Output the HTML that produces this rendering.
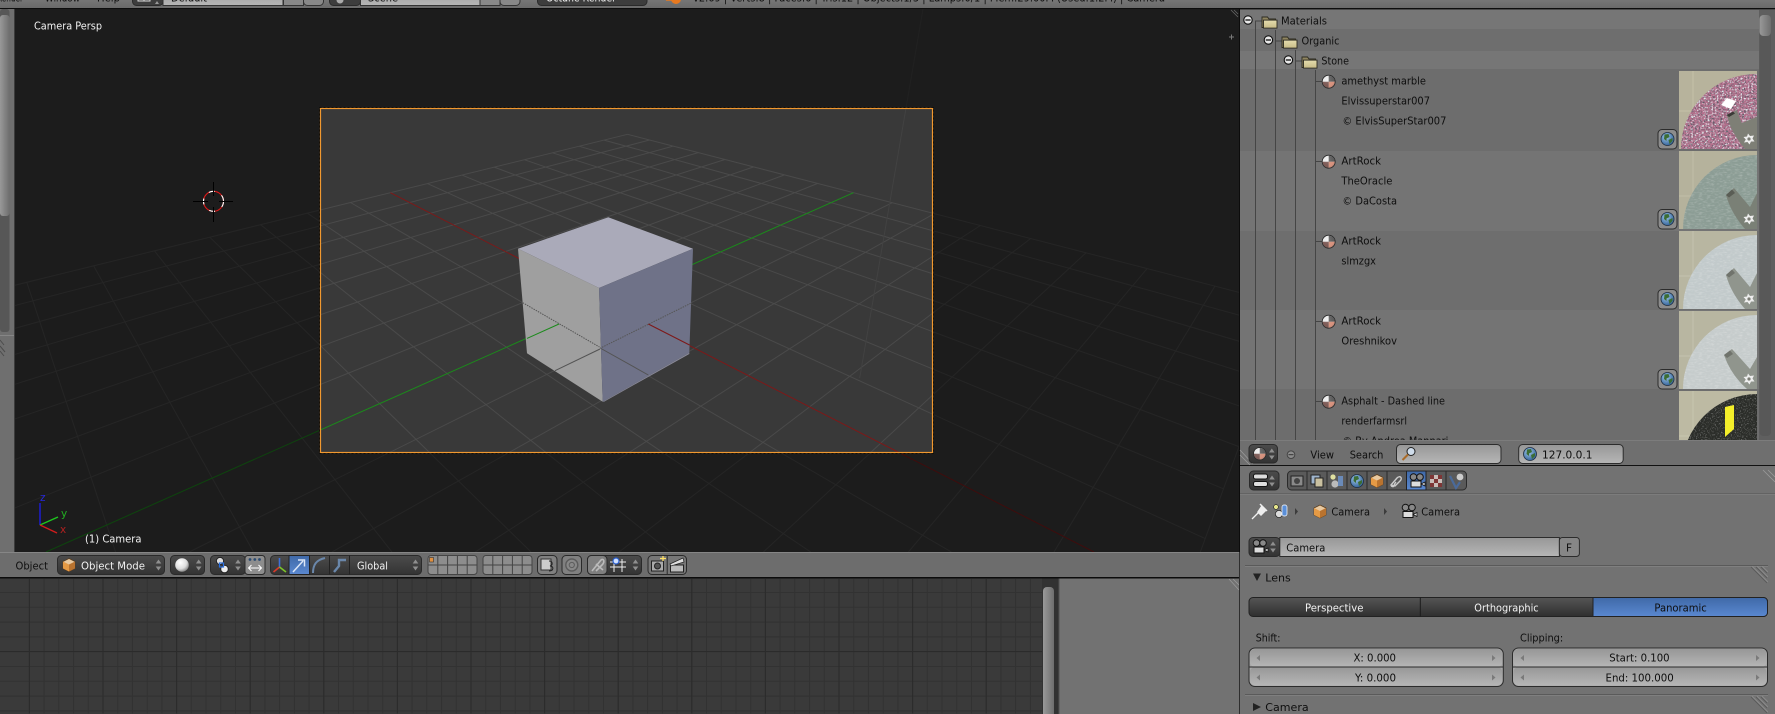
<!DOCTYPE html>
<html>
<head>
<meta charset="utf-8">
<style>
html,body{margin:0;padding:0;background:#727272;width:1775px;height:714px;overflow:hidden}
svg{display:block}
text{font-family:"DejaVu Sans","Liberation Sans",sans-serif;font-size:10.5px;fill:#0e0e0e}
text.w{fill:#f2f2f2}
</style>
</head>
<body>
<svg xmlns="http://www.w3.org/2000/svg" width="1775" height="714" viewBox="0 0 1775 714" style="overflow:hidden">
<defs>
<linearGradient id="fld" x1="0" y1="0" x2="0" y2="1"><stop offset="0" stop-color="#979797"/><stop offset="1" stop-color="#b6b6b6"/></linearGradient>
<linearGradient id="drk" x1="0" y1="0" x2="0" y2="1"><stop offset="0" stop-color="#4c4c4c"/><stop offset="1" stop-color="#333"/></linearGradient>
<linearGradient id="dk2" x1="0" y1="0" x2="0" y2="1"><stop offset="0" stop-color="#555"/><stop offset="1" stop-color="#2f2f2f"/></linearGradient>
<linearGradient id="blu" x1="0" y1="0" x2="0" y2="1"><stop offset="0" stop-color="#3f69a8"/><stop offset="1" stop-color="#5a88d0"/></linearGradient>
<linearGradient id="sb" x1="0" y1="0" x2="1" y2="0"><stop offset="0" stop-color="#999"/><stop offset="1" stop-color="#6e6e6e"/></linearGradient>
<linearGradient id="bar" x1="0" y1="0" x2="0" y2="1"><stop offset="0" stop-color="#767676"/><stop offset="1" stop-color="#6a6a6a"/></linearGradient>
<radialGradient id="ball" cx=".38" cy=".32" r=".75"><stop offset="0" stop-color="#fff"/><stop offset=".6" stop-color="#ddd"/><stop offset="1" stop-color="#777"/></radialGradient>
<radialGradient id="glb" cx=".4" cy=".35" r=".7"><stop offset="0" stop-color="#9fc6ea"/><stop offset="1" stop-color="#2f5f95"/></radialGradient>
<radialGradient id="matsh" cx=".38" cy=".32" r=".8"><stop offset="0" stop-color="#fff" stop-opacity=".2"/><stop offset=".7" stop-color="#888" stop-opacity="0"/><stop offset="1" stop-color="#000" stop-opacity=".35"/></radialGradient>
<linearGradient id="fold" x1="0" y1="0" x2="0" y2="1"><stop offset="0" stop-color="#e4dcae"/><stop offset="1" stop-color="#c9bd87"/></linearGradient>
<filter id="spk" x="0" y="0" width="100%" height="100%"><feTurbulence type="fractalNoise" baseFrequency=".55" numOctaves="2" seed="4"/><feColorMatrix values="0 0 0 0 .1  0 0 0 0 .1  0 0 0 0 .13  2.4 2.4 0 0 -2.3"/></filter>
<filter id="spw" x="0" y="0" width="100%" height="100%"><feTurbulence type="fractalNoise" baseFrequency=".55" numOctaves="2" seed="11"/><feColorMatrix values="0 0 0 0 .8  0 0 0 0 .87  0 0 0 0 .9  2.4 2.4 0 0 -2.4"/></filter>
<filter id="spd" x="0" y="0" width="100%" height="100%"><feTurbulence type="fractalNoise" baseFrequency=".8" numOctaves="1" seed="7"/><feColorMatrix values="0 0 0 0 .55  0 0 0 0 .55  0 0 0 0 .55  2 0 0 0 -1.05"/></filter>
<filter id="spt" x="0" y="0" width="100%" height="100%"><feTurbulence type="fractalNoise" baseFrequency=".25 .7" numOctaves="2" seed="3"/><feColorMatrix values="0 0 0 0 .95  0 0 0 0 .95  0 0 0 0 .95  1.6 0 0 0 -.7"/></filter>
<clipPath id="vp"><rect x="15" y="9" width="1224" height="543"/></clipPath>
<clipPath id="list"><rect x="1240" y="10" width="535" height="430"/></clipPath>
<clipPath id="top"><rect x="0" y="0" width="1775" height="8"/></clipPath>

<symbol id="mat" viewBox="-7 -7 14 14" overflow="visible">
<circle r="6.4" fill="#ddd" stroke="#2a2a2a" stroke-width="1"/>
<path d="M0 0V-6A6 6 0 0 0-6 0Z" fill="#f0f0f0"/><path d="M0 0H6A6 6 0 0 0 0-6Z" fill="#5c5c5c"/>
<path d="M0 0V6A6 6 0 0 0 6 0Z" fill="#d9937e"/><path d="M0 0H-6A6 6 0 0 0 0 6Z" fill="#7d5a55"/>
<circle r="6" fill="url(#matsh)"/>
</symbol>
<symbol id="globe" viewBox="-7 -7 14 14" overflow="visible">
<circle r="6.5" fill="url(#glb)" stroke="#1d2d40" stroke-width=".8"/>
<path d="M-3-4.500 1-5 2-2 -1-.5-1 2-3.500 0ZM1 1 5-1 5 2 2 5Z" fill="#3c6d34"/>
</symbol>
<symbol id="cube" viewBox="-7 -7 14 14" overflow="visible">
<path d="M0-6.500 6-3.500V3.500L0 6.500-6 3.500V-3.500Z" fill="#e8c9a0" stroke="#5a3c1c" stroke-width=".7"/>
<path d="M0-.5 6-3.500V3.500L0 6.500Z" fill="#b9732f"/><path d="M0-.5-6-3.500V3.500L0 6.500Z" fill="#e59a45"/>
</symbol>
<symbol id="cam" viewBox="-9 -8 18 16" overflow="visible">
<circle cx="-3.500" cy="-4" r="3.300" fill="#888" stroke="#111"/><circle cx="3" cy="-4" r="3.300" fill="#888" stroke="#111"/>
<rect x="-6" y="0" width="10" height="6" fill="#ddd" stroke="#111"/><path d="M4 3 8 1V5Z" fill="#ddd" stroke="#111" stroke-width=".7"/>
</symbol>
<symbol id="upd" viewBox="-3 -6 6 12" overflow="visible">
<path d="M0-5.500 2.800-1.500H-2.800ZM0 5.500 2.800 1.500H-2.800Z" fill="#8f8f8f"/>
</symbol>
<symbol id="minus" viewBox="-5 -5 10 10" overflow="visible">
<circle r="4.200" fill="#e8e8e8" stroke="#111" stroke-width="1.100"/><path d="M-2.600 0H2.600" stroke="#111" stroke-width="1.300"/>
</symbol>
<symbol id="folder" viewBox="0 0 16 13" overflow="visible">
<path d="M.5 1.500H6L7.500 3.500H14V12H.5Z" fill="#8f8560" stroke="#2c2a20" stroke-width=".9"/>
<rect x="2" y="4.600" width="13.500" height="8" fill="url(#fold)" stroke="#2c2a20" stroke-width=".9"/>
</symbol>
<symbol id="gear" viewBox="-6 -6 12 12" overflow="visible">
<path d="M-1-5.500 1-3 5-3.500 3.500-.5 5.500 2.500 2 2.500 .5 5.500-1.500 3-5 3.500-3.200.5-5.500-2-2-2.500Z" fill="#eee"/><circle r="1.600" fill="#7c7d75"/>
</symbol>
<symbol id="stripes" viewBox="0 0 18 18">
<path d="M2 0 18 16M7 0 18 11M12 0 18 6" stroke="#8a8a8a" stroke-width="1"/><path d="M1 1 17 17M6 1 17 12M11 1 17 7" stroke="#555" stroke-width=".7"/>
</symbol>
</defs>

<!-- base -->
<rect width="1775" height="714" fill="#727272"/>

<!-- top bar -->
<rect width="1775" height="8" fill="url(#bar)"/>
<g clip-path="url(#top)">
<text x="-3" y="1.500" textLength="26" lengthAdjust="spacingAndGlyphs">Render</text>
<text x="45" y="1.500" textLength="35" lengthAdjust="spacingAndGlyphs">Window</text>
<text x="97" y="1.500" textLength="23" lengthAdjust="spacingAndGlyphs">Help</text>
<rect x="132.500" y="-14" width="30.500" height="19.500" rx="4" fill="#3d3d3d" stroke="#2a2a2a"/>
<path d="M138-8H150V1H138ZM144-8V1M138-2H150" stroke="#ddd" fill="none"/>
<path d="M157 1 159 4 155 4Z" fill="#999"/>
<rect x="163" y="-14" width="120" height="19.500" fill="url(#fld)" stroke="#333"/>
<rect x="283.500" y="-14" width="20" height="19.500" fill="#888" stroke="#333"/>
<rect x="303.500" y="-14" width="20" height="19.500" rx="4" fill="#888" stroke="#333"/>
<text x="171" y="1.500" textLength="36" lengthAdjust="spacingAndGlyphs">Default</text>
<rect x="329.500" y="-14" width="31" height="19.500" rx="4" fill="#3d3d3d" stroke="#2a2a2a"/>
<circle cx="340" cy="0" r="3.500" fill="#aaa"/>
<rect x="360.500" y="-14" width="120" height="19.500" fill="url(#fld)" stroke="#333"/>
<rect x="480" y="-14" width="20" height="19.500" fill="#888" stroke="#333"/>
<rect x="500" y="-14" width="20" height="19.500" rx="4" fill="#888" stroke="#333"/>
<text x="368" y="1.500" textLength="30" lengthAdjust="spacingAndGlyphs">Scene</text>
<rect x="537.500" y="-14" width="109.500" height="19.500" rx="4" fill="#3d3d3d" stroke="#2a2a2a"/>
<text class="w" x="546" y="1.500" textLength="70" lengthAdjust="spacingAndGlyphs">Octane Render</text>
<circle cx="676" cy="-1" r="5" fill="#e8791f"/><path d="M666 0H672" stroke="#e8791f" stroke-width="1.500"/>
<text x="693" y="1.500" textLength="472" lengthAdjust="spacingAndGlyphs">v2.69 | Verts:8 | Faces:6 | Tris:12 | Objects:1/3 | Lamps:0/1 | Mem:29.00M (Used:1.2M) | Camera</text>
</g>
<rect x="0" y="8" width="1775" height="1.400" fill="#0d0d0d"/>

<!-- left strip -->
<rect x="0" y="9" width="14" height="543" fill="#6f6f6f"/>
<rect x="0" y="9" width="9.500" height="323" rx="3" fill="#575757"/>
<rect x="0" y="15" width="9.500" height="201" rx="3" fill="url(#sb)"/>
<rect x="0" y="335" width="14" height="1" fill="#868686"/>
<path d="M0 340 4 345M0 346 5 352M0 351 4 356" stroke="#4c4c4c"/>
<rect x="14" y="9" width="1" height="543" fill="#3c3c3c"/>

<!-- 3D viewport -->
<g clip-path="url(#vp)">
<rect x="15" y="9" width="1224" height="543" fill="#393939"/>
<g id="grid" stroke="#4a4a4a" stroke-width="1" fill="none"></g>
<path d="M923 9 859.700 378" stroke="#424242" stroke-width="1"/>
<path d="M390.400 192.700 606 303" stroke="#7e1818" stroke-width="1"/>
<path d="M606 303 1094 552" stroke="#7e1818" stroke-width="1"/>
<path d="M853.500 192.700 606 303" stroke="#1b8a1b" stroke-width="1"/>
<path d="M606 303 46 552" stroke="#1b8a1b" stroke-width="1"/>
<!-- cube -->
<path d="M608.300 217.300 693 248.700 599 288 518 248.700Z" fill="#aaaab9"/>
<path d="M518 248.700 599 288 602.700 401.700 527 353.300Z" fill="#9f9f9f"/>
<path d="M599 288 693 248.700 689.300 352.700 602.700 401.700Z" fill="#6f7288"/>
<path d="M689.300 352.700 602.700 401.700 604 401.700 689.300 354Z" fill="#8a8a99"/>
<path d="M522.700 302.700 599.500 347M690.700 303.300 600 348.300" stroke="#565656" stroke-width="1" stroke-dasharray="1.500 1" fill="none"/>
<path d="M600 349 555 370.700M601 348.500 648.300 375" stroke="#535353" stroke-width="1" fill="none"/>
<path d="M648.300 324 689.500 345" stroke="#7e1818" stroke-width="1"/>
<path d="M559 324 527 338.400" stroke="#1b8a1b" stroke-width="1"/>
<!-- passepartout -->
<path fill-rule="evenodd" d="M15 9H1239V552H15ZM320 108H933V453H320Z" fill="#000" fill-opacity=".5"/>
<rect x="319.500" y="107.500" width="614" height="346" fill="none" stroke="#000" stroke-width="1" stroke-dasharray="2 2"/>
<rect x="320.500" y="108.500" width="612" height="344" fill="none" stroke="#f0982f" stroke-width="1.200"/>
</g>
<text class="w" x="34" y="29.500" textLength="68" lengthAdjust="spacingAndGlyphs">Camera Persp</text>
<!-- 3D cursor -->
<ellipse cx="213.500" cy="201.300" rx="10" ry="10" fill="none" stroke="#e01818" stroke-width="1.100"/>
<ellipse cx="213.500" cy="201.300" rx="10" ry="10" fill="none" stroke="#fff" stroke-width="1.100" stroke-dasharray="6 8"/>
<path d="M193 201.500H208M219 201.500H233M213.500 182V196M213.500 207V222" stroke="#000" stroke-width="1" fill="none"/>
<!-- corner -->
<path d="M1231 10 1238 17M1234 10 1238 14" stroke="#666" stroke-width=".8"/>
<path d="M1229 37H1234M1231.500 34.500V39.500" stroke="#7a7a7a" stroke-width="1"/>
<!-- axis widget -->
<path d="M40 525V503" stroke="#1c1ce0" stroke-width="1.400"/>
<path d="M40 525 58 517" stroke="#1ec81e" stroke-width="1.400"/>
<path d="M40 525 57 533" stroke="#d21c1c" stroke-width="1.400"/>
<text x="40" y="501" style="fill:#2828d8">z</text>
<text x="61" y="517" style="fill:#22b022">y</text>
<text x="60" y="533" style="fill:#b02020">x</text>
<text class="w" x="85" y="542.500" textLength="56.500" lengthAdjust="spacingAndGlyphs">(1) Camera</text>

<!-- 3D header -->
<rect x="0" y="552" width="1239" height="25.500" fill="#6d6d6d"/>
<rect x="0" y="552" width="1239" height="1" fill="#868686"/>
<rect x="0" y="577" width="1239" height="1.600" fill="#0c0c0c"/>
<text x="15.500" y="569.500" textLength="32.500" lengthAdjust="spacingAndGlyphs">Object</text>

<rect x="57.500" y="555.500" width="107" height="19" rx="4" fill="url(#drk)" stroke="#2a2a2a"/>
<use href="#cube" x="62" y="558" width="14" height="14"/>
<text class="w" x="81" y="569.500" textLength="64" lengthAdjust="spacingAndGlyphs">Object Mode</text>
<use href="#upd" x="155.500" y="559" width="6" height="12"/>

<rect x="170.500" y="555.500" width="34" height="19" rx="4" fill="url(#drk)" stroke="#2a2a2a"/>
<circle cx="182" cy="565" r="6.800" fill="url(#ball)"/>
<use href="#upd" x="195.700" y="559" width="6" height="12"/>

<rect x="210.500" y="555.500" width="35" height="19" rx="4" fill="url(#drk)" stroke="#2a2a2a"/>
<rect x="245" y="555.500" width="20" height="19" rx="3" fill="#8d8d8d" stroke="#2a2a2a"/>
<circle cx="220" cy="561" r="3.600" fill="#ddd" stroke="#222"/><circle cx="224.500" cy="569" r="3.800" fill="#eee" stroke="#222"/>
<rect x="219.500" y="563" width="4" height="4" fill="none" stroke="#2a6fe0" stroke-width="1.200"/>
<use href="#upd" x="235" y="559" width="6" height="12"/>
<circle cx="250" cy="559.500" r="1.400" fill="#2a4a70"/><circle cx="254.800" cy="559.500" r="1.400" fill="#2a4a70"/><circle cx="259.500" cy="559.500" r="1.400" fill="#2a4a70"/>
<path d="M249 568H261M251.500 565 248.500 568 251.500 571M258.500 565 261.500 568 258.500 571" stroke="#fff" fill="none"/>

<rect x="270.500" y="555.500" width="151" height="19" rx="4" fill="url(#drk)" stroke="#2a2a2a"/>
<rect x="289" y="555.500" width="20.500" height="19" fill="url(#blu)" stroke="#222"/>
<path d="M329.500 555.500V574.500M349.500 555.500V574.500" stroke="#222"/>
<path d="M279.500 567V558" stroke="#3f6fd8" stroke-width="1.600"/><path d="M279.500 567 273.500 572" stroke="#d83a2a" stroke-width="1.600"/><path d="M279.500 567 286 572" stroke="#7cc52a" stroke-width="1.600"/>
<path d="M293 572 303 561M298 560H304.500V566.500" stroke="#dbe6f7" fill="none" stroke-width="1.500"/>
<path d="M313 573C313 565 316 560 325 558" stroke="#6a87aa" stroke-width="2" fill="none"/>
<path d="M334 572 339 566V560H346" stroke="#6a87aa" stroke-width="2.400" fill="none"/>
<text class="w" x="357" y="569.500" textLength="31" lengthAdjust="spacingAndGlyphs">Global</text>
<use href="#upd" x="412.500" y="559" width="6" height="12"/>

<g fill="#8d8d8d" stroke="#444">
<rect x="428" y="555.500" width="49" height="19" rx="3"/><rect x="483" y="555.500" width="49" height="19" rx="3"/>
</g>
<path d="M437.800 555.500V574.500M447.600 555.500V574.500M457.400 555.500V574.500M467.200 555.500V574.500M428 565H477M492.800 555.500V574.500M502.600 555.500V574.500M512.400 555.500V574.500M522.200 555.500V574.500M483 565H532" stroke="#444"/>
<rect x="429.500" y="557.500" width="4" height="4.500" fill="#e09040" stroke="#333" stroke-width=".6"/>

<rect x="537.500" y="555.500" width="19.500" height="19" rx="4" fill="#808080" stroke="#2a2a2a"/>
<rect x="541" y="559" width="10" height="11" fill="#ccc" stroke="#333"/><path d="M549 561C553 561 553 565 550 566C554 566 554 571 549 571" stroke="#222" fill="none"/>
<rect x="562" y="555.500" width="19.500" height="19" rx="4" fill="#808080" stroke="#2a2a2a"/>
<circle cx="571.800" cy="565" r="6" fill="#888" stroke="#5c5c5c" stroke-width="1.400"/><circle cx="571.800" cy="565" r="2.600" fill="none" stroke="#5c5c5c"/>
<rect x="587.500" y="555.500" width="54" height="19" rx="4" fill="url(#drk)" stroke="#2a2a2a"/>
<rect x="587.500" y="555.500" width="19.500" height="19" rx="4" fill="#7f7f7f" stroke="#2a2a2a"/>
<path d="M592 571 601 560C604 558 605 562 602 565L596 571M596 564 603 570" stroke="#bbb" stroke-width="1.600" fill="none"/>
<path d="M614 559V572M622 559V572M610 567H626M610 562H626" stroke="#eee" fill="none"/><circle cx="616" cy="561" r="3" fill="#cfe0ff" stroke="#2a5fd0" stroke-width="1.200"/>
<use href="#upd" x="632.500" y="559" width="6" height="12"/>
<rect x="648" y="555.500" width="38.500" height="19" rx="4" fill="#777" stroke="#2a2a2a"/>
<path d="M667.200 555.500V574.500" stroke="#2a2a2a"/>
<rect x="651.500" y="561" width="12" height="10" fill="#aaa" stroke="#222"/><circle cx="657.500" cy="566" r="3" fill="#555" stroke="#222"/><path d="M660 558.500H666M663 556V561" stroke="#ffe066" stroke-width="1.300"/>
<rect x="670.500" y="565" width="13" height="7" fill="#bbb" stroke="#222"/><path d="M670 564 683 558 684 562 671 566Z" fill="#ddd" stroke="#222" stroke-width=".7"/>

<!-- graph editor area -->
<rect x="0" y="578.500" width="1042" height="135.500" fill="#3a3a3a"/>
<g id="g2d" fill="none"></g>
<rect x="1042" y="578.500" width="16.500" height="135.500" fill="#323232"/>
<path d="M1043 714V591A4 4 0 0 1 1047 587H1050A4 4 0 0 1 1054 591V714Z" fill="url(#sb)"/>
<rect x="1058.500" y="578.500" width="1" height="135.500" fill="#525252"/>
<rect x="1059.500" y="578.500" width="180" height="135.500" fill="#727272"/>
<path d="M1229 579 1239 590M1233 579 1239 585" stroke="#999" stroke-width=".8"/>
<rect x="1239" y="552" width="1" height="162" fill="#2e2e2e"/>

<!-- right: browser list -->
<rect x="1239" y="9" width="1" height="543" fill="#0c0c0c"/>
<g clip-path="url(#list)">
<rect x="1240" y="10" width="535" height="430" fill="#727272"/>
<rect x="1240" y="10" width="519" height="19" fill="#767676"/>
<rect x="1240" y="29" width="519" height="22" fill="#6e6e6e"/>
<rect x="1240" y="51" width="519" height="18" fill="#767676"/>
<rect x="1240" y="69" width="519" height="82" fill="#6d6d6d"/>
<rect x="1240" y="151" width="519" height="80" fill="#747474"/>
<rect x="1240" y="231" width="519" height="79" fill="#6e6e6e"/>
<rect x="1240" y="310" width="519" height="79" fill="#747474"/>
<rect x="1240" y="389" width="519" height="51" fill="#6d6d6d"/>
<rect x="1759" y="10" width="16" height="430" fill="#5f5f5f"/>
<rect x="1759.500" y="15" width="11.500" height="421" rx="4" fill="#585858"/>
<rect x="1759.500" y="15" width="11.500" height="21" rx="4" fill="url(#sb)"/>

<!-- tree lines -->
<g stroke="#454545" stroke-width="1" fill="none">
<path d="M1255.500 21V440M1275.500 30V440M1295.500 50V440M1315.500 70V440"/>
<path d="M1255 21H1262M1275 41H1282M1295 61H1302M1315 81.500H1322M1315 161.500H1322M1315 241.500H1322M1315 321.500H1322M1315 401.500H1322"/>
</g>
<use href="#minus" x="1243" y="15" width="10" height="10"/>
<use href="#minus" x="1263.400" y="35" width="10" height="10"/>
<use href="#minus" x="1283.400" y="55" width="10" height="10"/>
<use href="#folder" x="1261.500" y="15.500" width="16" height="13"/>
<use href="#folder" x="1281.500" y="35.500" width="16" height="13"/>
<use href="#folder" x="1301.500" y="55.500" width="16" height="13"/>
<text x="1281" y="24.500" textLength="46" lengthAdjust="spacingAndGlyphs">Materials</text>
<text x="1301.500" y="44.500" textLength="38" lengthAdjust="spacingAndGlyphs">Organic</text>
<text x="1321.400" y="64.500" textLength="27.600" lengthAdjust="spacingAndGlyphs">Stone</text>

<use href="#mat" x="1321.700" y="74.700" width="14" height="14"/>
<use href="#mat" x="1321.700" y="154.700" width="14" height="14"/>
<use href="#mat" x="1321.700" y="234.700" width="14" height="14"/>
<use href="#mat" x="1321.700" y="314.700" width="14" height="14"/>
<use href="#mat" x="1321.700" y="394.700" width="14" height="14"/>

<text x="1341.400" y="84.500" textLength="84.600" lengthAdjust="spacingAndGlyphs">amethyst marble</text>
<text x="1341.400" y="104.500" textLength="88.600" lengthAdjust="spacingAndGlyphs">Elvissuperstar007</text>
<text x="1342.400" y="124.500" textLength="104" lengthAdjust="spacingAndGlyphs">© ElvisSuperStar007</text>
<text x="1341.400" y="164.500" textLength="39.600" lengthAdjust="spacingAndGlyphs">ArtRock</text>
<text x="1341.400" y="184.500" textLength="51" lengthAdjust="spacingAndGlyphs">TheOracle</text>
<text x="1342.400" y="204.500" textLength="54.600" lengthAdjust="spacingAndGlyphs">© DaCosta</text>
<text x="1341.400" y="244.500" textLength="39.600" lengthAdjust="spacingAndGlyphs">ArtRock</text>
<text x="1341.400" y="264.500" textLength="34.600" lengthAdjust="spacingAndGlyphs">slmzgx</text>
<text x="1341.400" y="324.500" textLength="39.600" lengthAdjust="spacingAndGlyphs">ArtRock</text>
<text x="1341.400" y="344.500" textLength="55.600" lengthAdjust="spacingAndGlyphs">Oreshnikov</text>
<text x="1341.400" y="404.500" textLength="103.600" lengthAdjust="spacingAndGlyphs">Asphalt - Dashed line</text>
<text x="1341.400" y="424.500" textLength="65.600" lengthAdjust="spacingAndGlyphs">renderfarmsrl</text>
<text x="1342.400" y="444.500" textLength="106" lengthAdjust="spacingAndGlyphs">© By Andrea Mannari</text>

<!-- globe buttons -->
<g fill="#8c8c8c" stroke="#2c2c2c">
<rect x="1658" y="129.500" width="19" height="19.500" rx="4"/><rect x="1658" y="209.500" width="19" height="19.500" rx="4"/><rect x="1658" y="289.500" width="19" height="19.500" rx="4"/><rect x="1658" y="369.500" width="19" height="19.500" rx="4"/>
</g>
<use href="#globe" x="1660.500" y="132" width="14" height="14"/>
<use href="#globe" x="1660.500" y="212" width="14" height="14"/>
<use href="#globe" x="1660.500" y="292" width="14" height="14"/>
<use href="#globe" x="1660.500" y="372" width="14" height="14"/>

<!-- thumbnails -->
<svg x="1679" y="71" width="78" height="78" viewBox="0 0 78 78">
<rect width="78" height="78" fill="#b7b39c"/>
<path d="M0 40H78M14 0V78" stroke="#c4c0a9"/>
<circle cx="77" cy="78" r="75" fill="#b4708c"/>
<rect width="78" height="78" filter="url(#spk)" clip-path="circle(75px at 77px 78px)"/>
<rect width="78" height="78" filter="url(#spw)" clip-path="circle(75px at 77px 78px)"/>
<path d="M47.700 44 57.700 39 62.700 52 78 45.700V78H66Q52 62 47.700 44Z" fill="#7e7f76"/>
<path d="M47.700 44 54 40.500 56 42.500 50 46Z" fill="#3a3a36"/>
<path d="M42 34 48 27 57 30 52 38Z" fill="#fff"/>
<use href="#gear" x="64" y="62" width="12" height="12"/>
</svg>
<svg x="1679" y="151" width="78" height="78" viewBox="0 0 78 78">
<rect width="78" height="78" fill="#b5b29c"/>
<path d="M0 45H78M14 0V78" stroke="#c1bea8"/>
<circle cx="78" cy="78" r="74" fill="#8c9d95"/>
<rect width="78" height="78" filter="url(#spt)" opacity=".35" clip-path="circle(74px at 78px 78px)"/>
<path d="M47 44 55 37 71 56 78 42V78H66Q52 62 47 44Z" fill="#7a8076"/><path d="M47 44 53 38.500 56 42 50 46.500Z" fill="#5a5d55"/>
<use href="#gear" x="64" y="62" width="12" height="12"/>
</svg>
<svg x="1679" y="231" width="78" height="78" viewBox="0 0 78 78">
<rect width="78" height="78" fill="#b8b6a1"/>
<path d="M0 45H78M14 0V78" stroke="#c4c2ae"/>
<circle cx="78" cy="78" r="74" fill="#c2cacb"/>
<rect width="78" height="78" filter="url(#spt)" opacity=".4" clip-path="circle(74px at 78px 78px)"/>
<path d="M47 44 55 37 71 56 78 42V78H66Q52 62 47 44Z" fill="#90958d"/><path d="M47 44 53 38.500 56 42 50 46.500Z" fill="#70736c"/>
<use href="#gear" x="64" y="62" width="12" height="12"/>
</svg>
<svg x="1679" y="311" width="78" height="78" viewBox="0 0 78 78">
<rect width="78" height="78" fill="#b8b6a1"/>
<path d="M0 45H78M14 0V78" stroke="#c4c2ae"/>
<circle cx="78" cy="78" r="74" fill="#c6cccc"/>
<rect width="78" height="78" filter="url(#spt)" opacity=".4" clip-path="circle(74px at 78px 78px)"/>
<path d="M45 44 53 38 71 58 78 46V78H68Q52 64 45 44Z" fill="#90958d"/><path d="M45 44 51 39.500 54 43 48 47Z" fill="#70736c"/>
<use href="#gear" x="64" y="62" width="12" height="12"/>
</svg>
<svg x="1679" y="391" width="78" height="78" viewBox="0 0 78 78">
<rect width="78" height="78" fill="#bdbaa3"/>
<path d="M0 45H78M14 0V78" stroke="#c8c5af"/>
<circle cx="78" cy="78" r="75" fill="#2b2d29"/>
<rect width="78" height="78" filter="url(#spd)" clip-path="circle(75px at 78px 78px)"/>
<path d="M46 16 55 14 55 38 46 46Z" fill="#f4ee2a"/>
</svg>
</g>

<!-- browser header -->
<rect x="1240" y="440" width="535" height="25" fill="#6f6f6f"/>
<rect x="1240" y="440" width="535" height="1" fill="#7c7c7c"/>
<rect x="1240" y="465" width="535" height="1.300" fill="#111"/>
<path d="M1240 455 1250 465M1240 450 1253 464" stroke="#9a9a9a" stroke-width=".8"/>
<rect x="1249" y="444.500" width="28.500" height="18.500" rx="4" fill="url(#drk)" stroke="#2a2a2a"/>
<use href="#mat" x="1253" y="447" width="13.500" height="13.500"/>
<use href="#upd" x="1268.800" y="448" width="6" height="12"/>
<circle cx="1291" cy="454.700" r="3.800" fill="#8c8c8c" stroke="#444"/><path d="M1288.500 454.700H1293.500" stroke="#333"/>
<text x="1310.400" y="458.700" textLength="23.600" lengthAdjust="spacingAndGlyphs">View</text>
<text x="1349.700" y="458.700" textLength="33.700" lengthAdjust="spacingAndGlyphs">Search</text>
<rect x="1396.500" y="444.500" width="104.500" height="19" rx="4" fill="url(#fld)" stroke="#2c2c2c"/>
<circle cx="1411" cy="451.500" r="4" fill="#cfdcea" stroke="#222"/><path d="M1408 454.500 1402.500 460" stroke="#a96a28" stroke-width="2"/>
<rect x="1518.700" y="444.500" width="104.500" height="19" rx="4" fill="url(#fld)" stroke="#2c2c2c"/>
<use href="#globe" x="1523" y="447" width="14" height="14"/>
<text x="1542" y="458.700" textLength="50.500" lengthAdjust="spacingAndGlyphs">127.0.0.1</text>

<!-- properties -->
<rect x="1240" y="466" width="535" height="248" fill="#727272"/>
<rect x="1249.500" y="471" width="29.500" height="19" rx="4" fill="url(#drk)" stroke="#2a2a2a"/>
<rect x="1253.500" y="474" width="14" height="5" rx="2" fill="#ddd" stroke="#111"/><rect x="1253.500" y="481.500" width="14" height="5" rx="2" fill="#ddd" stroke="#111"/>
<use href="#upd" x="1269" y="475" width="6" height="12"/>
<rect x="1287.500" y="471" width="179" height="19" rx="4" fill="#5a5a5a" stroke="#2a2a2a"/>
<rect x="1406.500" y="471" width="19.500" height="19" fill="url(#blu)" stroke="#222"/>
<path d="M1307 471V490M1327 471V490M1347 471V490M1367 471V490M1387 471V490M1446 471V490" stroke="#2a2a2a"/>
<rect x="1291" y="476" width="12" height="10" fill="#8a8a8a" stroke="#222"/><circle cx="1297" cy="481" r="3" fill="#444"/>
<rect x="1311" y="475" width="9" height="9" fill="#9fb4cc" stroke="#222"/><rect x="1315" y="478" width="8" height="9" fill="#c9c0a0" stroke="#222"/>
<circle cx="1333" cy="477" r="2.600" fill="#e0e0a0"/><circle cx="1335" cy="484" r="3.600" fill="#bbb"/><rect x="1338" y="476" width="5" height="10" fill="#6a8ab8"/>
<use href="#globe" x="1350" y="474" width="14" height="14"/>
<use href="#cube" x="1370" y="474" width="14" height="14"/>
<path d="M1391 485 1397 478C1400 475 1403 478 1400 481L1395 486ZM1396 482C1393 485 1395 488 1391 486" stroke="#ccc" fill="none" stroke-width="1.400"/>
<use href="#cam" x="1408" y="473" width="18" height="16"/>
<path d="M1430 475H1442V487H1430Z" fill="#c8bcb8"/><path d="M1430 475H1434V479H1430ZM1438 475H1442V479H1438ZM1434 479H1438V483H1434ZM1430 483H1434V487H1430ZM1438 483H1442V487H1438Z" fill="#7e3636"/>
<path d="M1450 476 1456 488 1460 482" stroke="#4a6a9a" stroke-width="2.200" fill="none"/><circle cx="1460" cy="477" r="3.400" fill="#ccc"/>
<rect x="1240" y="493" width="535" height="1" fill="#636363"/>
<rect x="1240" y="494" width="535" height="1" fill="#7c7c7c"/>
<path d="M1763 470 1775 482M1768 470 1775 477" stroke="#999" stroke-width=".8"/>

<path d="M1260 504 1267 511M1262 506 1258 512 1261 515 1266 510" fill="#eee" stroke="#eee" stroke-width="1.500"/><path d="M1252 519 1259 512" stroke="#f2f2f2" stroke-width="1.300"/>
<circle cx="1276" cy="507" r="2.400" fill="#e6e68c" stroke="#222" stroke-width=".6"/><circle cx="1279" cy="514" r="3.600" fill="#ddd" stroke="#222" stroke-width=".7"/><rect x="1282" y="505" width="5" height="11" rx="2" fill="#5a8fd8" stroke="#fff" stroke-width=".7"/>
<path d="M1295 508 1298 511.500 1295 515Z" fill="#3c3c3c"/>
<use href="#cube" x="1313" y="504.500" width="14" height="14"/>
<text x="1331.400" y="515.500" textLength="38.600" lengthAdjust="spacingAndGlyphs">Camera</text>
<path d="M1384 508 1387 511.500 1384 515Z" fill="#3c3c3c"/>
<use href="#cam" x="1400" y="503.500" width="18" height="16"/>
<text x="1421.300" y="515.500" textLength="38.700" lengthAdjust="spacingAndGlyphs">Camera</text>

<rect x="1249" y="537.500" width="31" height="19" rx="4" fill="url(#drk)" stroke="#2a2a2a"/>
<use href="#cam" x="1251" y="539" width="18" height="16"/>
<use href="#upd" x="1270" y="541" width="6" height="12"/>
<rect x="1279.800" y="537.500" width="279.600" height="19" fill="url(#fld)" stroke="#2c2c2c"/>
<rect x="1559.400" y="537.500" width="20" height="19" rx="3" fill="#868686" stroke="#2c2c2c"/>
<text x="1286.300" y="551.500" textLength="39" lengthAdjust="spacingAndGlyphs">Camera</text>
<text x="1566" y="551.500">F</text>

<rect x="1245" y="565" width="523" height="1" fill="#5a5a5a"/><rect x="1245" y="566" width="523" height="1" fill="#7f7f7f"/>
<path d="M1253 573.500H1261L1257 581Z" fill="#222"/>
<text x="1265.300" y="581.500" textLength="25.500" lengthAdjust="spacingAndGlyphs">Lens</text>
<use href="#stripes" x="1750" y="566" width="18" height="18"/>

<rect x="1249" y="597.500" width="518.500" height="19" rx="4" fill="url(#dk2)" stroke="#222"/>
<path d="M1593 597.500H1763.500A4 4 0 0 1 1767.500 601.500V612.500A4 4 0 0 1 1763.500 616.500H1593Z" fill="url(#blu)" stroke="#222"/>
<path d="M1420.300 597.500V616.500" stroke="#1c1c1c"/>
<text class="w" x="1305" y="611.700" textLength="58.400" lengthAdjust="spacingAndGlyphs">Perspective</text>
<text class="w" x="1474.300" y="611.700" textLength="64.400" lengthAdjust="spacingAndGlyphs">Orthographic</text>
<text x="1654.400" y="611.700" textLength="52.400" lengthAdjust="spacingAndGlyphs">Panoramic</text>

<text x="1255.700" y="641.500" textLength="24.800" lengthAdjust="spacingAndGlyphs">Shift:</text>
<text x="1520" y="641.500" textLength="43.200" lengthAdjust="spacingAndGlyphs">Clipping:</text>

<rect x="1249" y="648" width="254.300" height="38.500" rx="6" fill="#a8a8a8" stroke="#2c2c2c"/>
<rect x="1512.500" y="648" width="255" height="38.500" rx="6" fill="#a8a8a8" stroke="#2c2c2c"/>
<rect x="1250" y="649" width="252.300" height="18" rx="5" fill="url(#fld)"/><rect x="1250" y="667" width="252.300" height="18.500" rx="5" fill="url(#fld)"/>
<rect x="1513.500" y="649" width="253" height="18" rx="5" fill="url(#fld)"/><rect x="1513.500" y="667" width="253" height="18.500" rx="5" fill="url(#fld)"/>
<path d="M1249 667H1503M1512.500 667H1767.500" stroke="#2c2c2c"/>
<g fill="#7a7a7a">
<path d="M1260 655V661L1256.500 658ZM1260 674.500V680.500L1256.500 677.500ZM1492 655V661L1495.500 658ZM1492 674.500V680.500L1495.500 677.500Z"/>
<path d="M1524 655V661L1520.500 658ZM1524 674.500V680.500L1520.500 677.500ZM1756 655V661L1759.500 658ZM1756 674.500V680.500L1759.500 677.500Z"/>
</g>
<text x="1353.500" y="661.700" textLength="42.500" lengthAdjust="spacingAndGlyphs">X: 0.000</text>
<text x="1355" y="681.700" textLength="41" lengthAdjust="spacingAndGlyphs">Y: 0.000</text>
<text x="1609.300" y="661.700" textLength="60.300" lengthAdjust="spacingAndGlyphs">Start: 0.100</text>
<text x="1605.500" y="681.700" textLength="68.200" lengthAdjust="spacingAndGlyphs">End: 100.000</text>

<rect x="1245" y="694" width="523" height="1" fill="#5a5a5a"/><rect x="1245" y="695" width="523" height="1" fill="#7f7f7f"/>
<path d="M1253 703 1261 707 1253 711Z" fill="#222"/>
<text x="1265.300" y="711" textLength="43.400" lengthAdjust="spacingAndGlyphs">Camera</text>
<use href="#stripes" x="1750" y="696" width="18" height="18"/>
</svg>
<script>
(function(){
var NS="http://www.w3.org/2000/svg";
var x0=606,y0=303,x1=390.4,y1=192.7,x2=627.5,y2=134.3,x3=853.5,y3=192.7;
var dx1=x1-x2,dx2=x3-x2,sx=x0-x1+x2-x3,dy1=y1-y2,dy2=y3-y2,sy=y0-y1+y2-y3;
var det=dx1*dy2-dx2*dy1,g=(sx*dy2-dx2*sy)/det,h=(dx1*sy-sx*dy1)/det;
var a=x1-x0+g*x1,b=x3-x0+h*x3,d=y1-y0+g*y1,e=y3-y0+h*y3;
function P(s,t){var w=g*s+h*t+1;return [(a*s+b*t+x0)/w,(d*s+e*t+y0)/w];}
var LIM=552;
function seg(A,B){
  if(A[1]>LIM&&B[1]>LIM)return "";
  function cut(O,I){var k=(LIM-I[1])/(O[1]-I[1]);return [I[0]+(O[0]-I[0])*k,LIM];}
  var a1=A,b1=B;
  if(A[1]>LIM)a1=cut(A,B);
  if(B[1]>LIM)b1=cut(B,A);
  return "M"+a1[0].toFixed(1)+" "+a1[1].toFixed(1)+"L"+b1[0].toFixed(1)+" "+b1[1].toFixed(1);
}
var G=document.getElementById("grid"),p="";
for(var i=-8;i<=8;i++){
  if(i===0)continue;
  p+=seg(P(i/8,-1),P(i/8,1));
  p+=seg(P(-1,i/8),P(1,i/8));
}
var el=document.createElementNS(NS,"path");el.setAttribute("d",p);G.appendChild(el);
var g2=document.getElementById("g2d"),mi="",ma="",x,y;
for(x=103-73.6;x<1042;x+=14.72){mi+="M"+x.toFixed(1)+" 579V713.5";}
for(y=592.5;y<713;y+=14.8){mi+="M0 "+y.toFixed(1)+"H1042";}
for(x=29.4;x<1042;x+=73.6){ma+="M"+x.toFixed(1)+" 579V713.5";}
ma+="M0 651.5H1042";
var m1=document.createElementNS(NS,"path");m1.setAttribute("d",mi);m1.setAttribute("stroke","#323232");g2.appendChild(m1);
var m2=document.createElementNS(NS,"path");m2.setAttribute("d",ma);m2.setAttribute("stroke","#2b2b2b");g2.appendChild(m2);
})();
</script>
</body>
</html>
